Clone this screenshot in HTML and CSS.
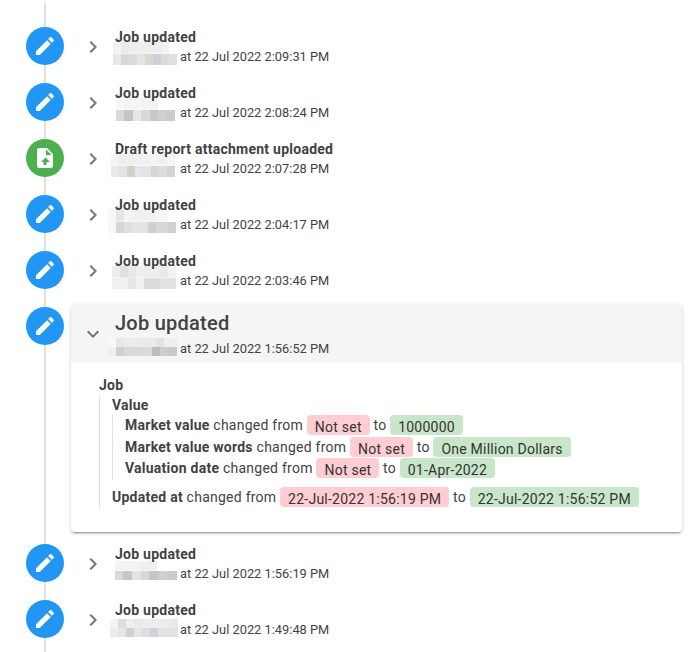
FILE: index.html
```html
<!DOCTYPE html>
<html lang="en">
<head>
<meta charset="UTF-8">
<meta name="viewport" content="width=device-width, initial-scale=1.0">
<title>Job history</title>
<link rel="stylesheet" href="styles.css">
</head>
<body>

<svg class="icon-defs" aria-hidden="true">
    <symbol id="i-pencil" viewBox="0 0 24 24"><path d="M20.71,7.04C21.1,6.65 21.1,6 20.71,5.63L18.37,3.29C18,2.9 17.35,2.9 16.96,3.29L15.12,5.12L18.87,8.87M3,17.25V21H6.75L17.81,9.93L14.06,6.18L3,17.25Z"/></symbol>
    <symbol id="i-upload" viewBox="0 0 24 24"><path d="M14,2H6A2,2 0 0,0 4,4V20A2,2 0 0,0 6,22H18A2,2 0 0,0 20,20V8L14,2M13.5,16V19H10.5V16H8L12.5,11.5L17,16H13.5M13,9V3.5L18.5,9H13Z"/></symbol>
    <symbol id="i-right" viewBox="0 0 24 24"><path d="M8.59,16.58L13.17,12L8.59,7.41L10,6L16,12L10,18L8.59,16.58Z"/></symbol>
    <symbol id="i-down" viewBox="0 0 24 24"><path d="M7.41,8.58L12,13.17L16.59,8.58L18,10L12,16L6,10L7.41,8.58Z"/></symbol>
</svg>

<div class="timeline">

    <div class="entry">
        <div class="dot dot-blue"><svg><use href="#i-pencil"/></svg></div>
        <div class="row">
            <svg class="chevron"><use href="#i-right"/></svg>
            <div class="row-text">
                <div class="title">Job updated</div>
                <div class="meta"><span class="who"><span class="blur blur-a"></span></span>at 22 Jul 2022 2:09:31 PM</div>
            </div>
        </div>
    </div>

    <div class="entry">
        <div class="dot dot-blue"><svg><use href="#i-pencil"/></svg></div>
        <div class="row">
            <svg class="chevron"><use href="#i-right"/></svg>
            <div class="row-text">
                <div class="title">Job updated</div>
                <div class="meta"><span class="who"><span class="blur blur-b"></span></span>at 22 Jul 2022 2:08:24 PM</div>
            </div>
        </div>
    </div>

    <div class="entry">
        <div class="dot dot-green"><svg><use href="#i-upload"/></svg></div>
        <div class="row">
            <svg class="chevron"><use href="#i-right"/></svg>
            <div class="row-text">
                <div class="title">Draft report attachment uploaded</div>
                <div class="meta"><span class="who"><span class="blur blur-c"></span></span>at 22 Jul 2022 2:07:28 PM</div>
            </div>
        </div>
    </div>

    <div class="entry">
        <div class="dot dot-blue"><svg><use href="#i-pencil"/></svg></div>
        <div class="row">
            <svg class="chevron"><use href="#i-right"/></svg>
            <div class="row-text">
                <div class="title">Job updated</div>
                <div class="meta"><span class="who"><span class="blur blur-e"></span></span>at 22 Jul 2022 2:04:17 PM</div>
            </div>
        </div>
    </div>

    <div class="entry">
        <div class="dot dot-blue"><svg><use href="#i-pencil"/></svg></div>
        <div class="row">
            <svg class="chevron"><use href="#i-right"/></svg>
            <div class="row-text">
                <div class="title">Job updated</div>
                <div class="meta"><span class="who"><span class="blur blur-f"></span></span>at 22 Jul 2022 2:03:46 PM</div>
            </div>
        </div>
    </div>

    <div class="entry entry-open">
        <div class="dot dot-blue"><svg><use href="#i-pencil"/></svg></div>
        <div class="panel">
            <div class="panel-head">
                <svg class="chevron"><use href="#i-down"/></svg>
                <div class="row-text">
                    <div class="panel-title">Job updated</div>
                    <div class="meta"><span class="who"><span class="blur blur-d"></span></span>at 22 Jul 2022 1:56:52 PM</div>
                </div>
            </div>
            <div class="panel-body">
                <div class="group-name">Job</div>
                <div class="group">
                    <div class="group-name">Value</div>
                    <div class="group group-inner">
                        <div class="change"><b>Market value</b> changed from <span class="chip chip-old">Not set</span> to <span class="chip chip-new">1000000</span></div>
                        <div class="change"><b>Market value words</b> changed from <span class="chip chip-old">Not set</span> to <span class="chip chip-new">One Million Dollars</span></div>
                        <div class="change"><b>Valuation date</b> changed from <span class="chip chip-old">Not set</span> to <span class="chip chip-new">01-Apr-2022</span></div>
                    </div>
                    <div class="change change-last"><b>Updated at</b> changed from <span class="chip chip-old">22-Jul-2022 1:56:19 PM</span> to <span class="chip chip-new">22-Jul-2022 1:56:52 PM</span></div>
                </div>
            </div>
        </div>
    </div>

    <div class="entry">
        <div class="dot dot-blue"><svg><use href="#i-pencil"/></svg></div>
        <div class="row">
            <svg class="chevron"><use href="#i-right"/></svg>
            <div class="row-text">
                <div class="title">Job updated</div>
                <div class="meta"><span class="who"><span class="blur blur-g"></span></span>at 22 Jul 2022 1:56:19 PM</div>
            </div>
        </div>
    </div>

    <div class="entry">
        <div class="dot dot-blue"><svg><use href="#i-pencil"/></svg></div>
        <div class="row">
            <svg class="chevron"><use href="#i-right"/></svg>
            <div class="row-text">
                <div class="title">Job updated</div>
                <div class="meta"><span class="who"><span class="blur blur-h"></span></span>at 22 Jul 2022 1:49:48 PM</div>
            </div>
        </div>
    </div>

</div>

</body>
</html>
```

FILE: styles.css
```css
/* Job history timeline */
html, body {
    height: 100%;
}
body {
    margin: 0;
    overflow: hidden;
    background: #fff;
    color: #424242;
    font-family: Roboto, "Liberation Sans", sans-serif;
    font-size: 14px;
    letter-spacing: 0.25px;
}
.icon-defs {
    display: none;
}

.timeline {
    position: relative;
    padding-top: 18px;
    height: 634px;
}
.timeline::before {
    content: "";
    position: absolute;
    left: 44px;
    top: 3px;
    bottom: 0;
    width: 2px;
    background: #e0e0e0;
}

.entry {
    position: relative;
    display: flex;
    height: 56px;
}
.entry-open {
    height: 237px;
}

.dot {
    position: relative;
    flex: none;
    display: flex;
    align-items: center;
    justify-content: center;
    width: 38px;
    height: 38px;
    margin: 9px 7px 0 26px;
    border-radius: 50%;
}
.dot svg {
    width: 24px;
    height: 24px;
    fill: #fff;
}
.dot-blue {
    background: #2196f3;
}
.dot-green {
    background: #4caf50;
}

.row, .panel-head {
    display: flex;
    align-items: center;
}
.row {
    flex: 1;
    height: 56px;
}
.chevron {
    flex: none;
    width: 24px;
    height: 24px;
    margin: 2px 10px 0;
    fill: #757575;
}
.title {
    position: relative;
    z-index: 1;
    box-sizing: border-box;
    height: 20px;
    padding-top: 1px;
    font-weight: 700;
    line-height: 20px;
}
.meta {
    display: flex;
    align-items: center;
    height: 20px;
    font-size: 12.8px;
    letter-spacing: 0.02px;
}
.who {
    display: flex;
    align-self: flex-start;
    justify-content: flex-end;
    width: 65px;
    margin-left: -3px;
    margin-right: 3px;
}

/* pixelated names, two rows of blocks */
.blur {
    display: block;
    flex: none;
    height: 23px;
    margin-top: -4px;
    background-repeat: no-repeat;
    background-size: 100% 50%;
    background-position: top, bottom;
}
.blur-a {
    width: 64px;
    background-image:
        linear-gradient(90deg, #f3f3f3 0 8px, #e9eaec 8px 16px, #eeeeee 16px 24px, #f0efef 24px 32px, #efeeed 32px 40px, #eeeeef 40px 48px, #f1f1f1 48px 56px, #fff 56px),
        linear-gradient(90deg, #e8e8e8 0 8px, #d8d8d8 8px 16px, #dcdcdc 16px 24px, #e6e5e4 24px 32px, #dbd7d2 32px 40px, #cdd0d5 40px 48px, #dcdada 48px 56px, #dfdfdf 56px);
}
.blur-b {
    width: 59px;
    margin-right: 2px;
    background-image:
        linear-gradient(90deg, #f7f7f7 0 8px, #f2f3f5 8px 16px, #f5f5f5 16px 25px, #f3f3f3 25px 42px, #fff 42px),
        linear-gradient(90deg, #d9d9d9 0 8px, #c5c5cb 8px 17px, #e6e6e2 17px 25px, #d8d8d8 25px 34px, #c6c8cc 34px 42px, #d0cfcd 42px 50px, #c8ccd0 50px);
}
.blur-c {
    width: 64px;
    margin-right: 2px;
    background-image:
        linear-gradient(90deg, #f4f4f4 0 8px, #ededed 8px 16px, #f1efee 16px 24px, #eff1f3 24px 32px, #f1f1f1 32px 40px, #f4f4f4 40px 48px, #eeeeee 48px 56px, #f6f6f6 56px),
        linear-gradient(90deg, #e9e9e9 0 8px, #e3e3e3 8px 16px, #d3cfca 16px 24px, #e3e6ea 24px 32px, #e4e4e4 32px 40px, #d3d5d8 40px 48px, #dcdcdc 48px 56px, #d6d3d0 56px);
}
.blur-d {
    width: 69px;
    height: 18px;
    margin-top: -1px;
    background-image:
        linear-gradient(90deg, #f8f8f8 0 8px, #e8e8e8 8px 16px, #ececec 16px 32px, #eaeaea 32px 48px, #e2e2e2 48px 56px, #eeeeee 56px),
        linear-gradient(90deg, #eeeeee 0 8px, #cfd0d3 8px 16px, #d9d9d9 16px 32px, #dadada 32px 44px, #bdbcb8 44px 52px, #cdcdcd 52px 60px, #c5cad0 60px);
}
.blur-e {
    width: 68px;
    margin-right: 1px;
    background-image:
        linear-gradient(90deg, #faf7f5 0 8px, #e6e6e6 8px 16px, #f3f5f5 16px 24px, #f3f1ef 24px 32px, #eef0f2 32px 40px, #f2f2f2 40px 48px, #f6f6f6 48px 60px, #fff 60px),
        linear-gradient(90deg, #f8f5f3 0 8px, #d6d6d6 8px 16px, #dde0e0 16px 24px, #e6e4e2 24px 32px, #e4e4e4 32px 40px, #ccd0d4 40px 48px, #dad6d3 48px 60px, #cdd1d4 60px);
}
.blur-f {
    width: 64px;
    margin-right: 1px;
    background-image:
        linear-gradient(90deg, #ededed 0 8px, #dfdfdf 8px 16px, #e6e9ec 16px 24px, #eeeeee 24px 32px, #ebedef 32px 48px, #e6eaea 48px 56px, #f2f2f2 56px),
        linear-gradient(90deg, #f0f0f0 0 16px, #e6e6e6 16px 24px, #f0f0f0 24px 32px, #dcdcdc 32px 48px, #e2e2e2 48px);
}
.blur-g {
    width: 62px;
    height: 19px;
    margin-top: -2px;
    background-image:
        linear-gradient(90deg, #f3f3f3 0 8px, #f1f3f5 8px 16px, #f3f3f3 16px 26px, #f0f0f0 26px 42px, #fff 42px),
        linear-gradient(90deg, #d9d9d9 0 8px, #c5c5cb 8px 17px, #e3e3df 17px 26px, #d8d8d8 26px 34px, #c6c6c8 34px 44px, #d6cfc8 44px 52px, #c8ccd0 52px);
}
.blur-h {
    width: 68px;
    height: 18px;
    margin-top: 0;
    margin-right: -1px;
    background-image:
        linear-gradient(90deg, #f4f4f4 0 8px, #dedcdc 8px 16px, #eeeeee 16px 24px, #e9eaec 24px 32px, #ededed 32px 60px, #e9e9e9 60px),
        linear-gradient(90deg, #ececec 0 8px, #e4e6e8 8px 16px, #d2d0ce 16px 24px, #e6e6e6 24px 32px, #dedede 32px 40px, #d0d2d6 40px 48px, #e2e2e2 48px);
}

/* expanded entry */
.panel {
    position: relative;
    flex: none;
    display: flex;
    flex-direction: column;
    width: 611px;
    height: 228px;
    margin-top: 6px;
    border-radius: 4px;
    background: #fff;
    box-shadow: 0 3px 1px -2px rgba(0,0,0,.2), 0 2px 2px 0 rgba(0,0,0,.14), 0 1px 5px 0 rgba(0,0,0,.12);
}
.panel-head {
    flex: none;
    height: 59px;
    border-radius: 4px 4px 0 0;
    background: #f5f5f5;
}
.panel-head .chevron {
    margin-top: 0;
}
.panel-title {
    font-size: 20px;
    font-weight: 500;
    line-height: 28px;
    margin-bottom: 2px;
}
.panel-body {
    padding: 12px 28px;
    line-height: 20px;
}
.group-name {
    font-weight: 700;
}
.group {
    border-left: 1px solid #e0e0e0;
    padding-left: 12px;
}
.group-inner {
    margin-top: -1px;
    padding-top: 1px;
}
.change {
    height: 21.7px;
    line-height: 20px;
}
.change-last {
    margin-top: 7.4px;
}
.chip {
    display: inline-block;
    height: 20px;
    padding: 0 8px;
    border-radius: 4px;
    vertical-align: -2px;
    letter-spacing: 0.24px;
    line-height: 24px;
    color: #333;
}
.chip-old {
    background: #ffcdd2;
}
.chip-new {
    background: #c8e6c9;
}
```
